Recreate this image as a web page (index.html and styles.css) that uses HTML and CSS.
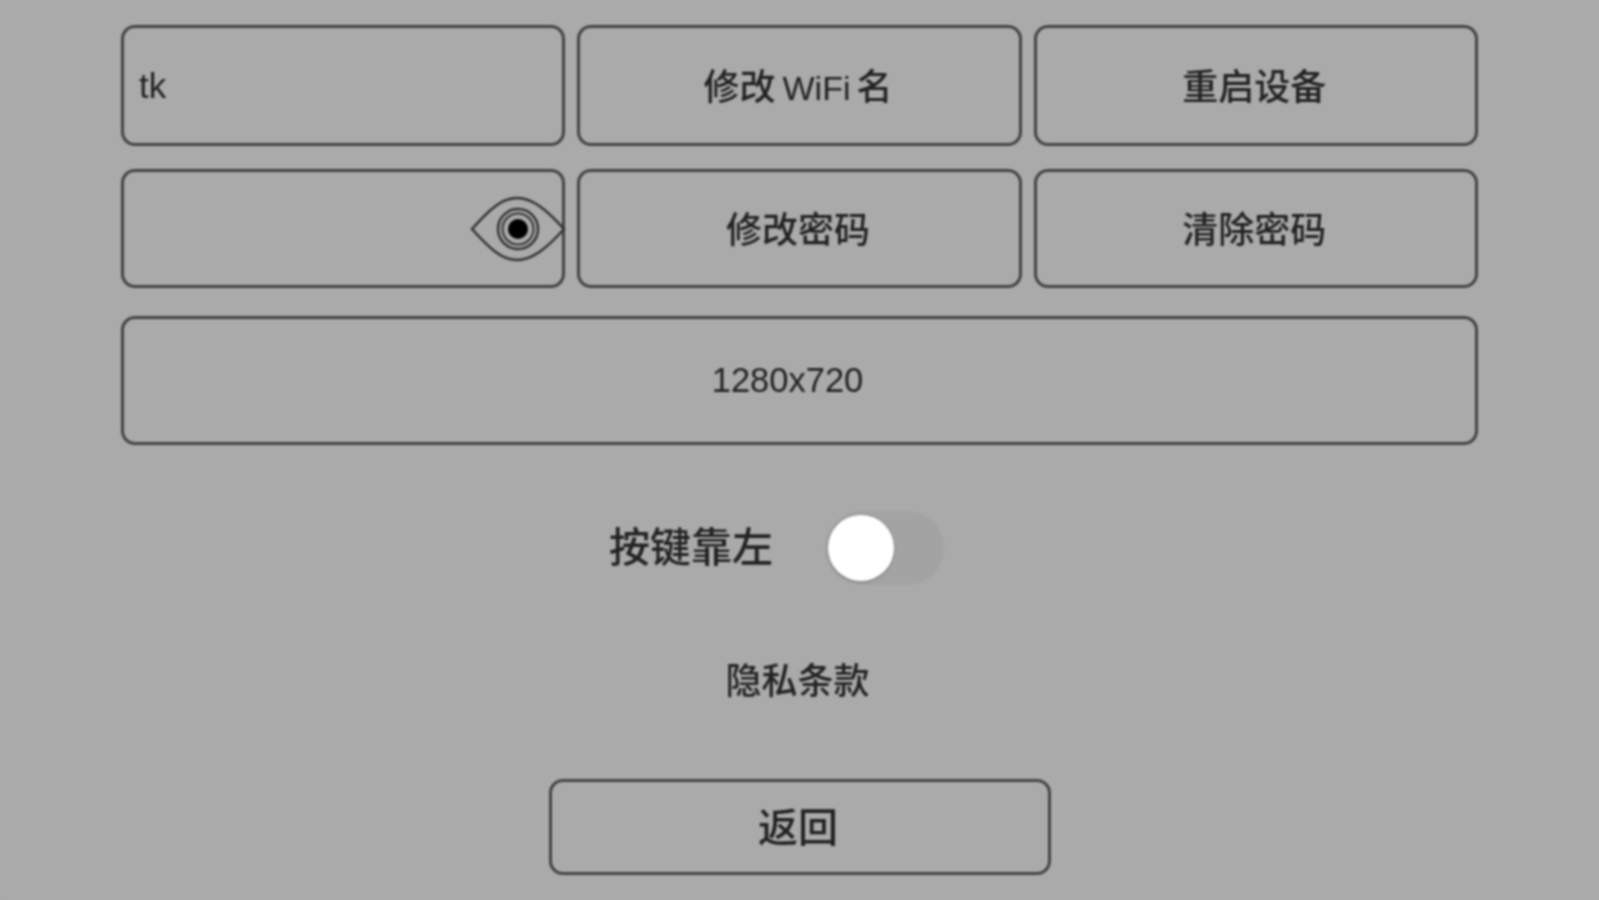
FILE: index.html
```html
<!DOCTYPE html>
<html>
<head>
  <meta charset="UTF-8">
  <title>Settings</title>
  <link rel="stylesheet" href="styles.css">
</head>
<body>
  <div class="page">
    <div class="grid">
      <div class="box box-input">tk</div>
      <div class="box"><span>修改 <span class="wifi">WiFi</span> 名</span></div>
      <div class="box">重启设备</div>
      <div class="box box-password">
        <svg class="eye" width="96" height="66" viewBox="0 0 96 66">
          <path d="M2 33 C20 13 32 2 47 2 C62 2 76 13 94 33 C76 53 62 64 47 64 C32 64 20 53 2 33 Z" fill="none" stroke="#333" stroke-width="2.5"/>
          <circle cx="48" cy="33" r="20" fill="none" stroke="#333" stroke-width="2.5"/>
          <circle cx="48" cy="33" r="15.5" fill="none" stroke="#333" stroke-width="2"/>
          <circle cx="48" cy="33" r="10" fill="#000"/>
        </svg>
      </div>
      <div class="box">修改密码</div>
      <div class="box">清除密码</div>
      <div class="box box-wide"><span class="res">1280x720</span></div>
    </div>

    <div class="toggle-row">
      <span class="toggle-label">按键靠左</span>
      <div class="track"><div class="knob"></div></div>
    </div>

    <div class="privacy">隐私条款</div>

    <div class="box back">返回</div>
  </div>
</body>
</html>
```

FILE: styles.css
```css
html, body {
  margin: 0;
  height: 100%;
  overflow: hidden;
  background: #aaaaaa;
}

/* source is a scaled up phone capture, so everything is a bit soft */
.page {
  height: 900px;
  box-sizing: border-box;
  padding: 25px 121px 0 121px;
  display: flex;
  flex-direction: column;
  align-items: center;
  font-family: "Liberation Sans", "Noto Sans CJK SC", sans-serif;
  font-weight: 500;
  color: #222;
  background: #aaaaaa;
  filter: blur(0.8px);
}

.grid {
  width: 100%;
  display: grid;
  grid-template-columns: repeat(3, 1fr);
  grid-template-rows: 121px 119px 134px;
  column-gap: 12px;
  row-gap: 23px;
}

.box {
  box-sizing: border-box;
  border: 3px solid #444;
  border-radius: 14px;
  display: flex;
  align-items: center;
  justify-content: center;
  padding: 0 3px 4px 0;
  font-size: 36px;
  white-space: pre;
}

.wifi {
  font-size: 34px;
  margin-left: -3px;
  margin-right: -4px;
}

.box-input {
  justify-content: flex-start;
  padding: 0 0 0 15px;
  font-size: 35px;
}

.box-password {
  position: relative;
  padding: 0;
}

.eye {
  position: absolute;
  right: -4px;
  top: 24px;
}

.box-wide {
  grid-column: 1 / 4;
  margin-top: 5px;
  padding-bottom: 0;
  font-size: 34.5px;
}

.res {
  padding-right: 21px;
}

.toggle-row {
  display: flex;
  align-items: center;
  gap: 52px;
  margin-top: 66px;
  padding-right: 46px;
}

.toggle-label {
  font-size: 41px;
  margin-top: -8px;
}

.track {
  width: 119px;
  height: 74px;
  border-radius: 37px;
  background: #a3a3a3;
  display: flex;
  align-items: center;
  padding-left: 3px;
  box-sizing: border-box;
}

.knob {
  width: 66px;
  height: 66px;
  border-radius: 50%;
  background: #fff;
  box-shadow: 0 1px 3px rgba(0,0,0,0.25);
}

.privacy {
  margin-top: 73px;
  padding-right: 4px;
  font-size: 36px;
  line-height: 48px;
}

.back {
  width: 502px;
  height: 96px;
  margin-top: 73px;
  font-size: 40px;
}
```
